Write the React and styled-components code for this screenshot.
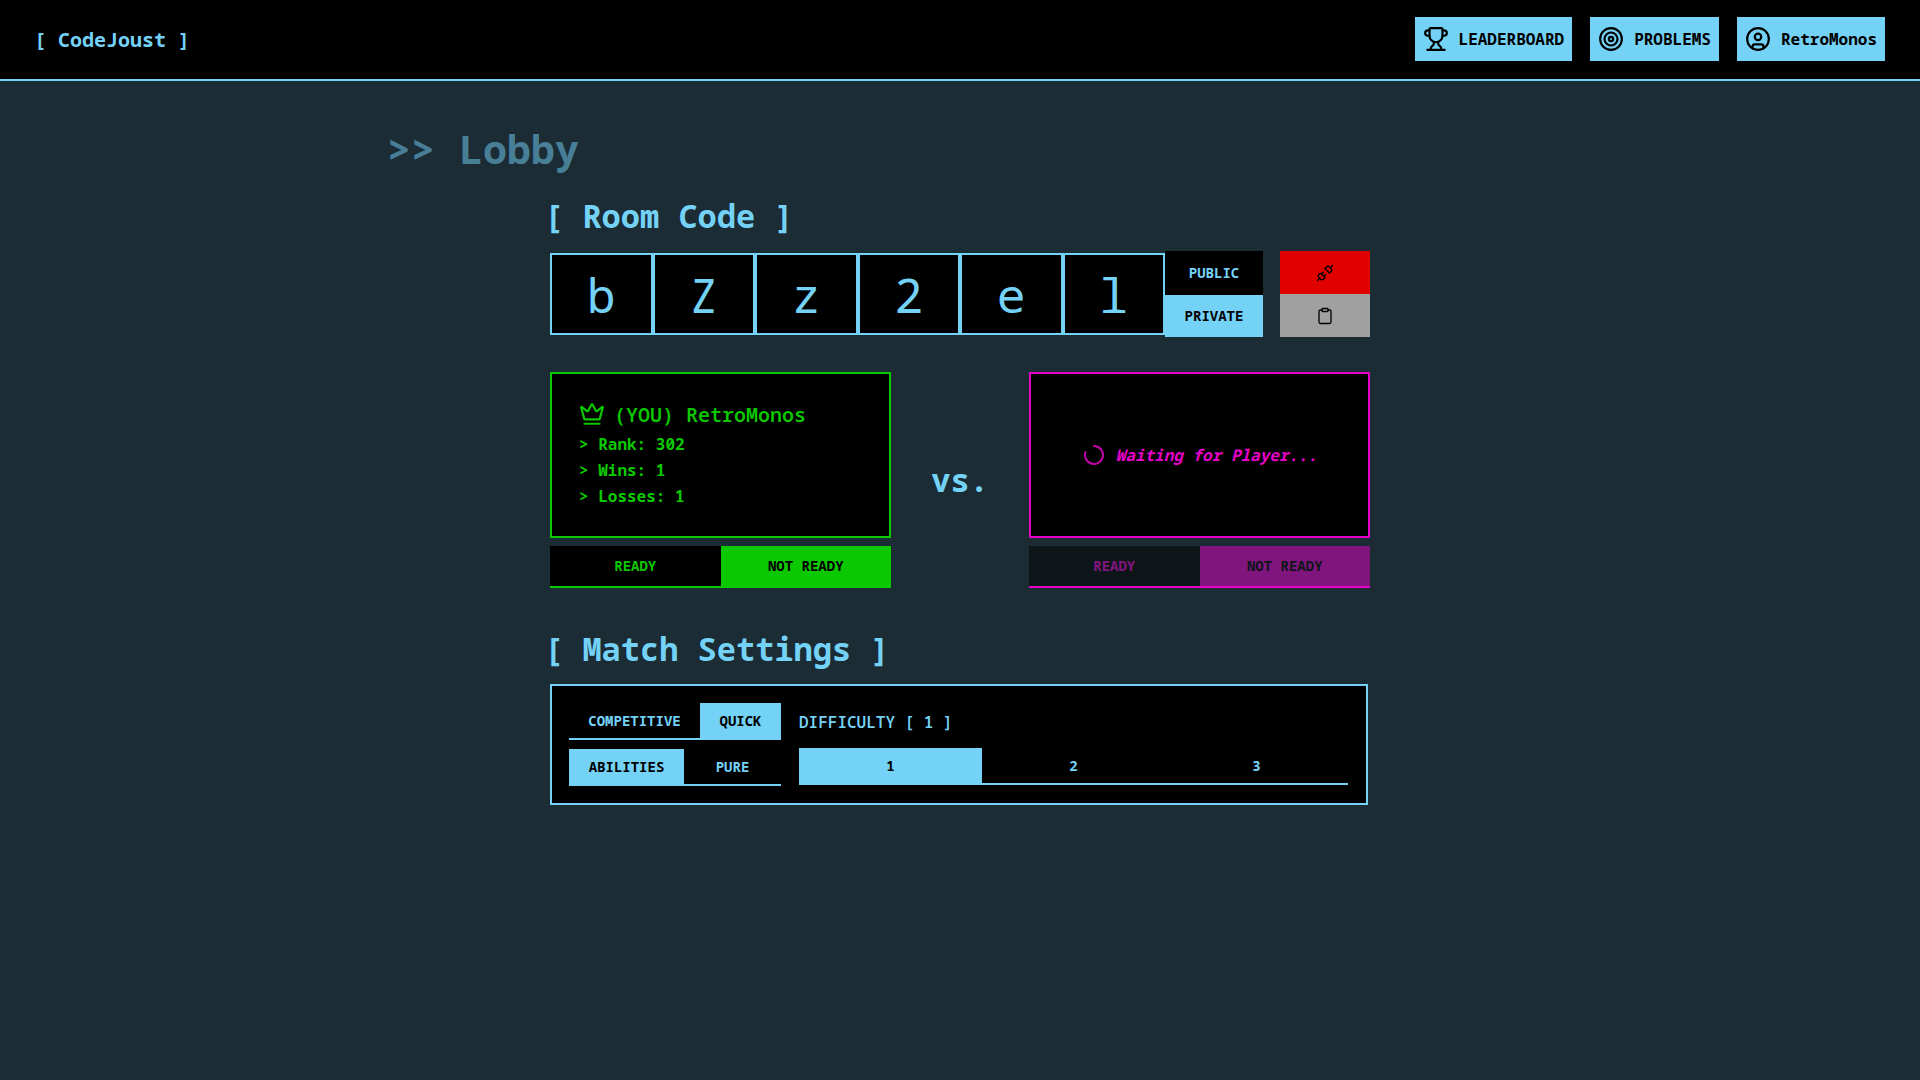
import React from "react";
import styled, { createGlobalStyle } from "styled-components";
import {
  CircleUser,
  Clipboard,
  Crown,
  LoaderCircle,
  Target,
  Trophy,
  Unplug,
} from "lucide-react";

const BLUE = "#75d2f7";
const GREEN = "#0cc800";
const MAGENTA = "#e600c8";
const MONO = `"Noto Sans Mono", "DejaVu Sans Mono", monospace`;

const GlobalStyle = createGlobalStyle`
  html, body {
    margin: 0;
    padding: 0;
    background: #1b2c34;
  }
  body {
    font-family: ${MONO};
    color: ${BLUE};
  }
  * {
    box-sizing: border-box;
  }
`;

const Page = styled.div`
  min-height: 1080px;
`;

const Header = styled.header`
  height: 81px;
  background: #000;
  border-bottom: 2px solid ${BLUE};
  display: flex;
  align-items: center;
  justify-content: space-between;
  padding: 0 35px 1px 34px;
`;

const Logo = styled.div`
  font-size: 20px;
  font-weight: 700;
`;

const Nav = styled.nav`
  display: flex;
  gap: 18px;
`;

const NavButton = styled.button`
  height: 44px;
  display: flex;
  align-items: center;
  gap: 10px;
  padding: 0 8px;
  border: none;
  background: ${BLUE};
  color: #000;
  font: 700 16px ${MONO};
`;

const Main = styled.main`
  width: 1144px;
  margin: 0 auto;
  padding-top: 40px;
`;

const Title = styled.h1`
  margin: 0 0 0 -1px;
  height: 56px;
  line-height: 56px;
  font-size: 40px;
  font-weight: 700;
  color: ${BLUE};
  opacity: 0.5;
`;

const Content = styled.div`
  width: 820px;
  margin: 0 auto;
`;

const SectionTitle = styled.h2`
  margin: ${(p) => p.$top}px 0 0 -6px;
  height: 40px;
  line-height: 40px;
  font-size: 32px;
  font-weight: 700;
`;

const CodeRow = styled.div`
  display: flex;
  align-items: center;
  margin-top: 15px;
`;

const CodeBox = styled.div`
  width: 615px;
  height: 82px;
  display: grid;
  grid-template-columns: repeat(6, 1fr);
`;

const CodeCell = styled.div`
  display: flex;
  align-items: center;
  justify-content: center;
  background: #000;
  border: 2px solid ${BLUE};
  font-size: 48px;
`;

const StackedToggle = styled.div`
  width: 98px;
  height: 86px;
  display: flex;
  flex-direction: column;
`;

const StackedOption = styled.div`
  flex: 1;
  display: flex;
  align-items: center;
  justify-content: center;
  padding-bottom: ${(p) => (p.$active ? 0 : 1)}px;
  background: ${(p) => (p.$active ? BLUE : "#000")};
  color: ${(p) => (p.$active ? "#000" : BLUE)};
  font-size: 14px;
  font-weight: 700;
`;

const ActionStack = styled.div`
  width: 90px;
  height: 86px;
  margin-left: 17px;
  display: flex;
  flex-direction: column;
`;

const ActionButton = styled.div`
  flex: 1;
  display: flex;
  align-items: center;
  justify-content: center;
  background: ${(p) => p.$bg};
  color: #000;
`;

const Versus = styled.div`
  display: grid;
  grid-template-columns: 341px 1fr 341px;
  align-items: center;
  margin-top: 35px;
`;

const VsLabel = styled.div`
  text-align: center;
  font-size: 32px;
  font-weight: 700;
  padding-bottom: 2px;
`;

const PlayerColumn = styled.div`
  display: flex;
  flex-direction: column;
  gap: 8px;
`;

const PlayerCard = styled.div`
  height: 166px;
  background: #000;
  border: 2px solid ${(p) => p.$color};
  color: ${(p) => p.$color};
  display: flex;
  flex-direction: column;
  justify-content: center;
  padding: 0 27px;
`;

const PlayerName = styled.div`
  display: flex;
  align-items: center;
  gap: 9px;
  font-size: 20px;
  font-weight: 600;
  height: 30px;
  margin-top: -2px;
  margin-bottom: 2px;
`;

const Stat = styled.div`
  height: 26px;
  line-height: 26px;
  font-size: 16px;
  font-weight: 700;
`;

const Waiting = styled.div`
  display: flex;
  align-items: center;
  justify-content: center;
  gap: 10px;
  font-size: 16px;
  font-weight: 700;
  font-style: italic;
`;

const Spinner = styled(LoaderCircle)`
  transform: rotate(-90deg);
  opacity: 0.85;
`;

const SegmentBar = styled.div`
  display: grid;
  grid-template-columns: ${(p) => p.$columns};
  height: ${(p) => p.$height}px;
  border-bottom: 2px solid ${(p) => p.$color};
`;

const Segment = styled.div`
  display: flex;
  align-items: center;
  justify-content: center;
  padding-bottom: 1px;
  background: ${(p) => (p.$active ? p.$color : "#000")};
  color: ${(p) => (p.$active ? "#000" : p.$color)};
  opacity: ${(p) => (p.$dim ? 0.5 : 1)};
  font-size: 14px;
  font-weight: 700;
`;

const SettingsPanel = styled.div`
  width: 818px;
  height: 121px;
  margin-top: 15px;
  background: #000;
  border: 2px solid ${BLUE};
  padding: 17px 17px 0;
  display: flex;
  gap: 18px;
`;

const ModeColumn = styled.div`
  width: 212px;
  display: flex;
  flex-direction: column;
  gap: 9px;
`;

const DifficultyColumn = styled.div`
  width: 549px;
  display: flex;
  flex-direction: column;
`;

const DifficultyLabel = styled.div`
  font-size: 16px;
  font-weight: 600;
  height: 45px;
  line-height: 38px;
`;

const ReadyToggle = ({ color, dim }) => (
  <SegmentBar $columns="1fr 1fr" $height={42} $color={color}>
    <Segment $color={color} $dim={dim}>READY</Segment>
    <Segment $color={color} $dim={dim} $active>NOT READY</Segment>
  </SegmentBar>
);

export default function App() {
  return (
    <Page>
      <GlobalStyle />
      <Header>
        <Logo>[ CodeJoust ]</Logo>
        <Nav>
          <NavButton><Trophy size={26} />LEADERBOARD</NavButton>
          <NavButton><Target size={26} />PROBLEMS</NavButton>
          <NavButton><CircleUser size={26} />RetroMonos</NavButton>
        </Nav>
      </Header>
      <Main>
        <Title>&gt;&gt; Lobby</Title>
        <Content>
          <SectionTitle $top={19}>[ Room Code ]</SectionTitle>
          <CodeRow>
            <CodeBox>
              {["b", "Z", "z", "2", "e", "l"].map((c, i) => (
                <CodeCell key={i}>{c}</CodeCell>
              ))}
            </CodeBox>
            <StackedToggle>
              <StackedOption>PUBLIC</StackedOption>
              <StackedOption $active>PRIVATE</StackedOption>
            </StackedToggle>
            <ActionStack>
              <ActionButton $bg="#e00000"><Unplug size={18} strokeWidth={1.75} /></ActionButton>
              <ActionButton $bg="#a0a0a0"><Clipboard size={18} strokeWidth={1.75} /></ActionButton>
            </ActionStack>
          </CodeRow>
          <Versus>
            <PlayerColumn>
              <PlayerCard $color={GREEN}>
                <PlayerName><Crown size={26} />(YOU) RetroMonos</PlayerName>
                <Stat>&gt; Rank: 302</Stat>
                <Stat>&gt; Wins: 1</Stat>
                <Stat>&gt; Losses: 1</Stat>
              </PlayerCard>
              <ReadyToggle color={GREEN} />
            </PlayerColumn>
            <VsLabel>vs.</VsLabel>
            <PlayerColumn>
              <PlayerCard $color={MAGENTA}>
                <Waiting><Spinner size={24} />Waiting for Player...</Waiting>
              </PlayerCard>
              <ReadyToggle color={MAGENTA} dim />
            </PlayerColumn>
          </Versus>
          <SectionTitle $top={41}>[ Match Settings ]</SectionTitle>
          <SettingsPanel>
            <ModeColumn>
              <SegmentBar $columns="131px 81px" $height={37} $color={BLUE}>
                <Segment $color={BLUE}>COMPETITIVE</Segment>
                <Segment $color={BLUE} $active>QUICK</Segment>
              </SegmentBar>
              <SegmentBar $columns="115px 97px" $height={37} $color={BLUE}>
                <Segment $color={BLUE} $active>ABILITIES</Segment>
                <Segment $color={BLUE}>PURE</Segment>
              </SegmentBar>
            </ModeColumn>
            <DifficultyColumn>
              <DifficultyLabel>DIFFICULTY [ 1 ]</DifficultyLabel>
              <SegmentBar $columns="repeat(3, 1fr)" $height={37} $color={BLUE}>
                <Segment $color={BLUE} $active>1</Segment>
                <Segment $color={BLUE}>2</Segment>
                <Segment $color={BLUE}>3</Segment>
              </SegmentBar>
            </DifficultyColumn>
          </SettingsPanel>
        </Content>
      </Main>
    </Page>
  );
}
